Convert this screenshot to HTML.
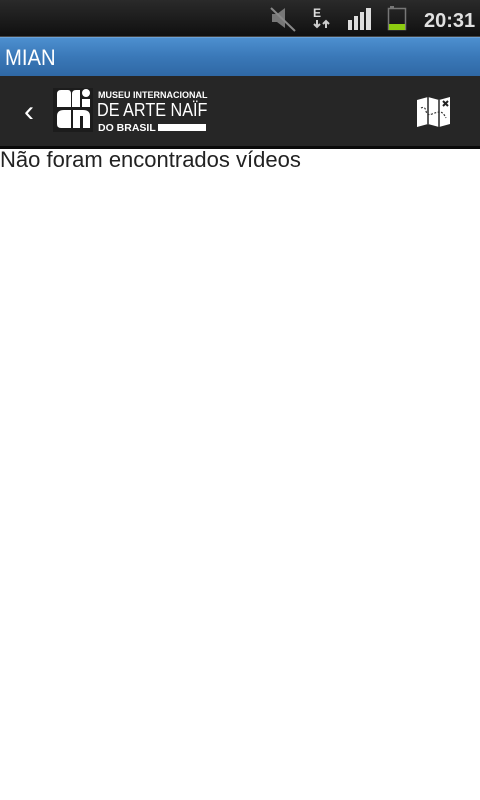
<!DOCTYPE html>
<html><head><meta charset="utf-8"><style>
*{margin:0;padding:0;box-sizing:border-box}
body{width:480px;height:800px;background:#fff;font-family:"Liberation Sans",sans-serif;position:relative;overflow:hidden}
.sb{position:absolute;left:0;top:0;width:480px;height:37px;background:linear-gradient(#2a2a2a,#101010);border-bottom:1px solid #444}
.blue{position:absolute;left:0;top:37px;width:480px;height:39px;background:linear-gradient(#4d8fcf,#3a78b8 50%,#2f68a5);border-top:1px solid #6aa2d8}
.blue span{position:absolute;left:5px;top:7px;color:#fff;font:22px "Liberation Sans",sans-serif;transform:scaleX(.92);transform-origin:left}
.bar{position:absolute;left:0;top:76px;width:480px;height:70px;background:#262626}
.line{position:absolute;left:0;top:146px;width:480px;height:3px;background:#0a0a0a}
.msg{position:absolute;left:0;top:147px;font-size:22px;color:#222;}
.t{position:absolute;color:#fff;white-space:nowrap}
</style></head><body>
<div class="sb">
<svg width="480" height="37" style="position:absolute;left:0;top:0">
 <path d="M272 14h5l8-6v20l-8-6h-5z" fill="#777"/>
 <line x1="271" y1="8" x2="295" y2="31" stroke="#888" stroke-width="2"/>
 <text x="313" y="17" fill="#ddd" font-size="12" font-weight="bold" font-family="Liberation Sans">E</text>
 <path d="M317 20v7M314 24l3 3 3-3M326 28v-7M323 24l3-3 3 3" stroke="#ccc" stroke-width="2" fill="none"/>
 <rect x="348" y="20" width="4" height="10" fill="#ddd"/><rect x="354" y="16" width="4" height="14" fill="#ddd"/><rect x="360" y="12" width="4" height="18" fill="#ddd"/><rect x="366" y="8" width="5" height="22" fill="#ddd"/>
 <rect x="390" y="6" width="4" height="2" fill="#777"/>
 <rect x="388.5" y="8.5" width="17" height="21" fill="none" stroke="#777" stroke-width="1.5"/>
 <rect x="389" y="24" width="16" height="6" fill="#8ccc10"/>
 <text x="424" y="27" fill="#e0e0e0" font-size="20" font-weight="bold" font-family="Liberation Sans">20:31</text>
</svg>
</div>
<div class="blue"><span>MIAN</span></div>
<div class="bar">
<div class="t" style="left:24px;top:19px;font-size:30px;">&#8249;</div>
<div style="position:absolute;left:53px;top:12px;width:40px;height:44px;background:#1c1c1c"></div>
<svg width="40" height="44" style="position:absolute;left:53px;top:12px">
 <path d="M4 6q0-4 4-4h7q3 0 3 4v13H4z" fill="#fff"/>
 <path d="M19 6q0-4 4-4h4v17h-8z" fill="#fff"/>
 <circle cx="33" cy="5" r="4" fill="#fff"/>
 <rect x="29" y="11" width="8" height="8" fill="#fff"/>
 <path d="M4 28q0-6 7-6h7v18H8q-4 0-4-4z" fill="#fff"/>
 <path d="M20 22h10q7 0 7 6v12h-7V28h-3v12h-7z" fill="#fff"/>
</svg>
<div class="t" style="left:98px;top:14px;font-size:9px;font-weight:bold">MUSEU INTERNACIONAL</div>
<div class="t" style="left:97px;top:24px;font-size:18px;transform:scaleX(.9);transform-origin:left">DE ARTE NAÏF</div>
<div class="t" style="left:98px;top:46px;font-size:10.5px;font-weight:bold">DO BRASIL</div>
<div style="position:absolute;left:158px;top:48px;width:48px;height:7px;background:#fff"></div>
<svg width="40" height="32" style="position:absolute;left:416px;top:20px">
 <path d="M1 4l11-3 11 3 11-3v27l-11 3-11-3-11 3z" fill="#fff"/>
 <path d="M12 1v27M23 4v27" stroke="#262626" stroke-width="1.5"/>
 <path d="M5 12q4-2 5 3t6 3 8-2 6 6" stroke="#333" stroke-width="1.2" stroke-dasharray="2 1.5" fill="none"/>
 <path d="M27 5l5 5M32 5l-5 5" stroke="#222" stroke-width="2"/>
</svg>
</div>
<div class="line"></div>
<div class="msg">Não foram encontrados vídeos</div>
</body></html>
